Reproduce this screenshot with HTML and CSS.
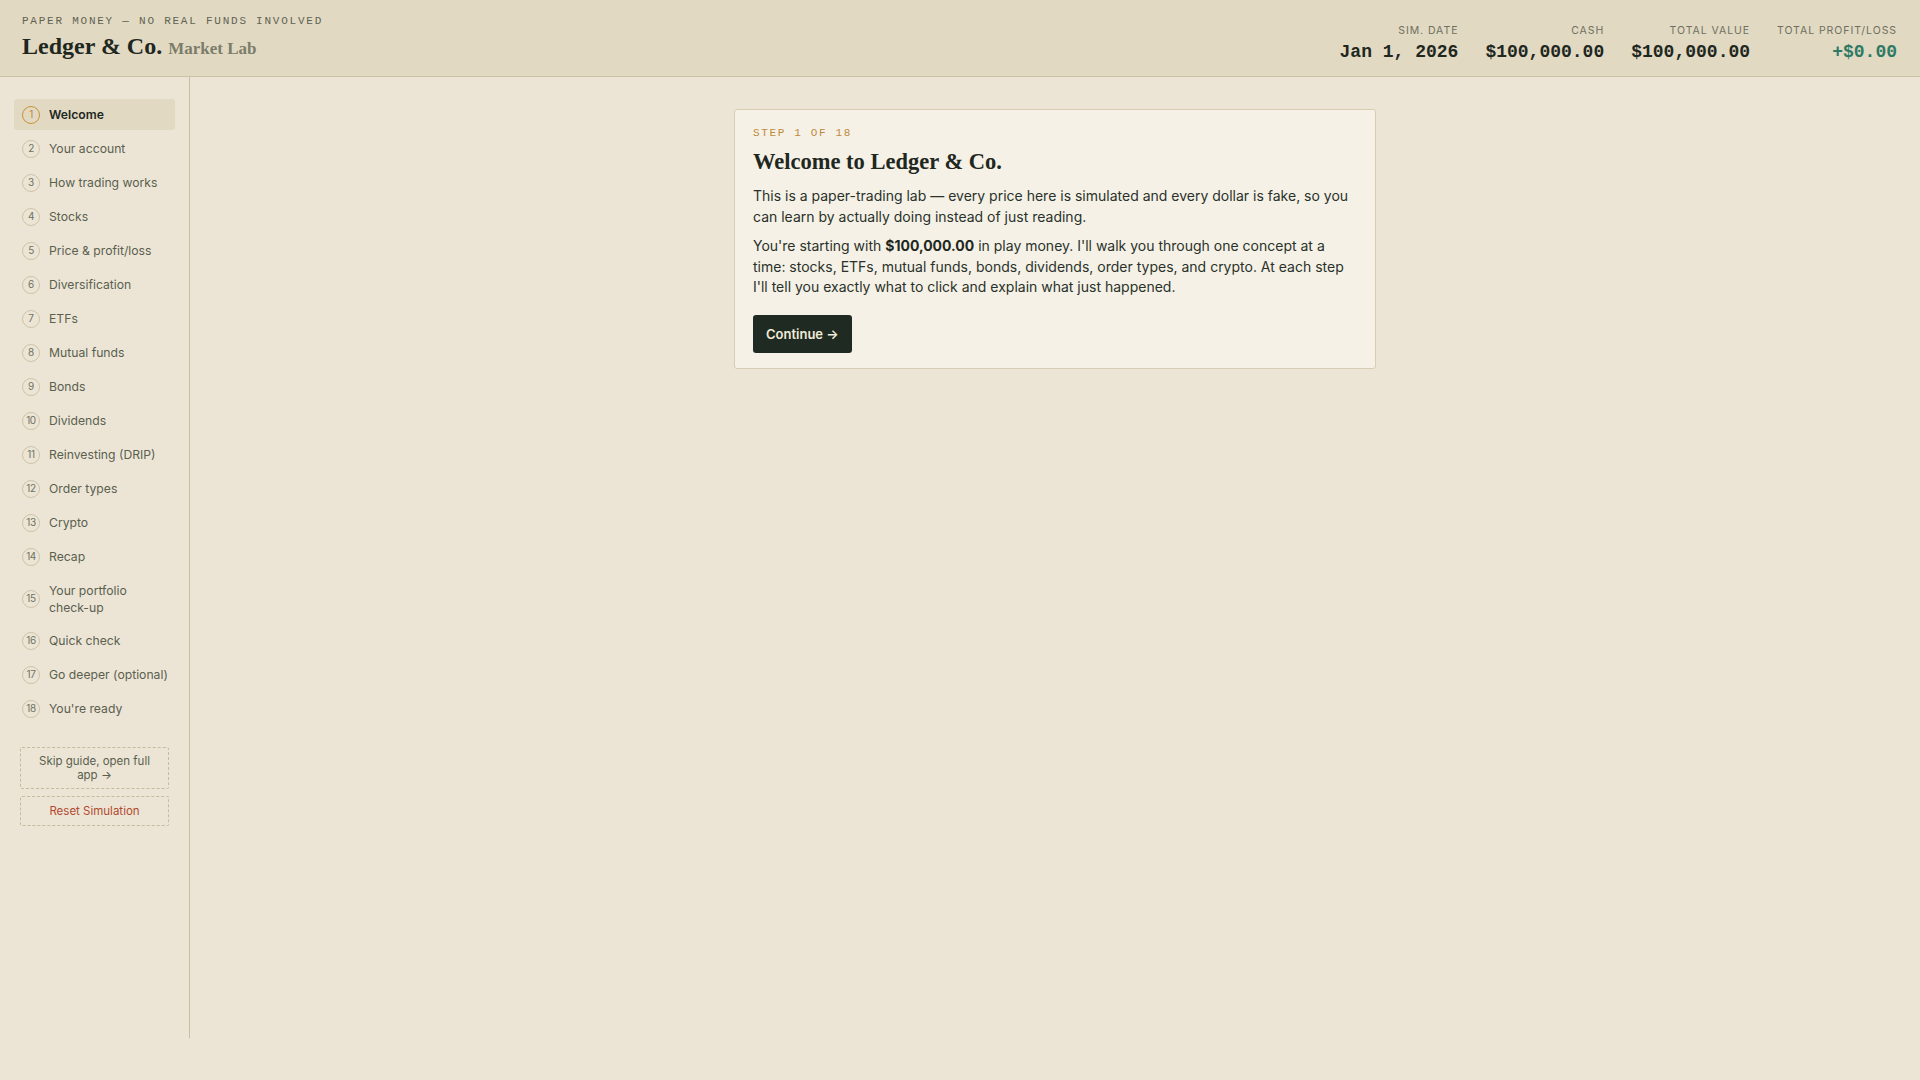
FILE: index.html
```html
<!DOCTYPE html>
<html lang="en">
<head>
    <meta charset="UTF-8">
    <meta name="viewport" content="width=device-width, initial-scale=1.0">
    <title>Ledger &amp; Co. Market Lab</title>
    <link rel="stylesheet" href="styles.css">
</head>
<body>
    <header class="topbar">
        <div class="brand">
            <div class="tagline">PAPER MONEY — NO REAL FUNDS INVOLVED</div>
            <div class="logo">Ledger &amp; Co. <span class="logo-sub">Market Lab</span></div>
        </div>
        <div class="stats">
            <div class="stat">
                <div class="stat-label">SIM. DATE</div>
                <div class="stat-value">Jan 1, 2026</div>
            </div>
            <div class="stat">
                <div class="stat-label">CASH</div>
                <div class="stat-value">$100,000.00</div>
            </div>
            <div class="stat">
                <div class="stat-label">TOTAL VALUE</div>
                <div class="stat-value">$100,000.00</div>
            </div>
            <div class="stat">
                <div class="stat-label">TOTAL PROFIT/LOSS</div>
                <div class="stat-value gain">+$0.00</div>
            </div>
        </div>
    </header>

    <div class="layout">
        <!-- 步骤导航 -->
        <nav class="sidebar">
            <ul class="steps">
                <li class="active"><span class="num">1</span><span>Welcome</span></li>
                <li><span class="num">2</span><span>Your account</span></li>
                <li><span class="num">3</span><span>How trading works</span></li>
                <li><span class="num">4</span><span>Stocks</span></li>
                <li><span class="num">5</span><span>Price &amp; profit/loss</span></li>
                <li><span class="num">6</span><span>Diversification</span></li>
                <li><span class="num">7</span><span>ETFs</span></li>
                <li><span class="num">8</span><span>Mutual funds</span></li>
                <li><span class="num">9</span><span>Bonds</span></li>
                <li><span class="num">10</span><span>Dividends</span></li>
                <li><span class="num">11</span><span>Reinvesting (DRIP)</span></li>
                <li><span class="num">12</span><span>Order types</span></li>
                <li><span class="num">13</span><span>Crypto</span></li>
                <li><span class="num">14</span><span>Recap</span></li>
                <li><span class="num">15</span><span>Your portfolio <span class="nowrap">check-up</span></span></li>
                <li><span class="num">16</span><span>Quick check</span></li>
                <li><span class="num">17</span><span>Go deeper (optional)</span></li>
                <li><span class="num">18</span><span>You're ready</span></li>
            </ul>
            <div class="side-actions">
                <a class="side-btn" href="javascript:;">Skip guide, open full app →</a>
                <a class="side-btn reset" href="javascript:;">Reset Simulation</a>
            </div>
        </nav>

        <main class="main">
            <section class="card">
                <div class="step-label">STEP 1 OF 18</div>
                <h1>Welcome to Ledger &amp; Co.</h1>
                <p>This is a paper-trading lab — every price here is simulated and every dollar is fake, so you can learn by actually doing instead of just reading.</p>
                <p>You're starting with <strong>$100,000.00</strong> in play money. I'll walk you through one concept at a time: stocks, ETFs, mutual funds, bonds, dividends, order types, and crypto. At each step I'll tell you exactly what to click and explain what just happened.</p>
                <button class="btn-primary">Continue →</button>
            </section>
        </main>
    </div>
</body>
</html>
```

FILE: styles.css
```css
body {
    margin: 0;
    padding: 0;
    background-color: #ece5d6;
    color: #1f2721;
    font-family: Inter, "Noto Sans", sans-serif;
}
ul, li {
    list-style: none;
    margin: 0;
    padding: 0;
}

/* 顶部栏 */
.topbar {
    display: flex;
    justify-content: space-between;
    align-items: flex-end;
    padding: 14px 23px 13px 22px;
    background-color: #e2d9c2;
    border-bottom: 1px solid #cdc1a5;
}
.tagline {
    font-family: "Liberation Mono", monospace;
    font-size: 11px;
    line-height: 14px;
    letter-spacing: 0.16em;
    color: #5f6353;
}
.logo {
    margin-top: 4px;
    font-family: "Liberation Serif", serif;
    font-weight: 700;
    font-size: 24px;
    line-height: 29px;
    color: #1f2721;
}
.logo-sub {
    font-size: 17px;
    color: #7b7d6b;
}
.stats {
    display: flex;
    gap: 27px;
}
.stat {
    text-align: right;
}
.stat-label {
    font-size: 10.5px;
    line-height: 13px;
    letter-spacing: 0.09em;
    color: #6d7061;
}
.stat-value {
    margin-top: 4px;
    font-family: "Liberation Mono", monospace;
    font-weight: 700;
    font-size: 18px;
    line-height: 22px;
    color: #1f2721;
}
.stat-value.gain {
    color: #2e7a64;
}

/* 主体布局 */
.layout {
    display: flex;
    align-items: flex-start;
}
.sidebar {
    box-sizing: border-box;
    width: 190px;
    height: 961px;
    flex-shrink: 0;
    padding: 22px 14px;
    border-right: 1px solid #c9bea3;
}
.steps {
    display: flex;
    flex-direction: column;
    gap: 3px;
}
.steps li {
    display: flex;
    align-items: center;
    gap: 9px;
    padding: 6.5px 4px 6.5px 8px;
    border-radius: 3px;
    font-size: 12.2px;
    line-height: 17px;
    color: #5a5f4e;
}
.steps .nowrap {
    white-space: nowrap;
}
.steps .num {
    box-sizing: border-box;
    flex-shrink: 0;
    width: 18px;
    height: 18px;
    border: 1px solid #cfc4a7;
    border-radius: 50%;
    display: flex;
    align-items: center;
    justify-content: center;
    font-size: 10px;
    letter-spacing: -0.04em;
    color: #6f7262;
}
.steps li.active {
    background-color: #e2d9c3;
    color: #1f2721;
    font-weight: 600;
}
.steps li.active .num {
    border-color: #c8913a;
    color: #c08533;
    font-weight: 400;
}
.side-actions {
    margin-top: 23px;
    padding: 0 6px;
    display: flex;
    flex-direction: column;
    gap: 7px;
}
.side-btn {
    display: block;
    padding: 6px 8px;
    border: 1px dashed #c6bba0;
    border-radius: 2px;
    text-align: center;
    font-size: 11.5px;
    line-height: 14px;
    color: #5a5f4e;
    text-decoration: none;
}
.side-btn.reset {
    padding: 7px 8px;
    color: #b24a30;
}

.main {
    flex: 1;
    padding: 32px 20px;
}
.card {
    max-width: 604px;
    margin: 0 auto;
    padding: 15px 18px 15px;
    background-color: #f5f1e6;
    border: 1px solid #d8cdb2;
    border-radius: 3px;
}
.step-label {
    font-family: "Liberation Mono", monospace;
    font-size: 11px;
    line-height: 16px;
    letter-spacing: 0.15em;
    color: #bf8a3b;
}
.card h1 {
    margin: 8px 0 0;
    font-family: "Liberation Serif", serif;
    font-weight: 700;
    font-size: 22.5px;
    line-height: 26px;
    color: #1f2721;
}
.card p {
    margin: 11px 0 0;
    font-size: 14px;
    line-height: 20.5px;
    color: #2a312b;
}
.card p + p {
    margin-top: 9px;
}
.card strong {
    font-weight: 700;
    color: #1f2721;
}
.btn-primary {
    margin-top: 17px;
    padding: 10px 13px;
    border: none;
    border-radius: 3px;
    background-color: #1f2a22;
    color: #f1ebda;
    font-family: Inter, sans-serif;
    font-weight: 600;
    font-size: 13px;
    line-height: 18px;
    cursor: pointer;
}
```
